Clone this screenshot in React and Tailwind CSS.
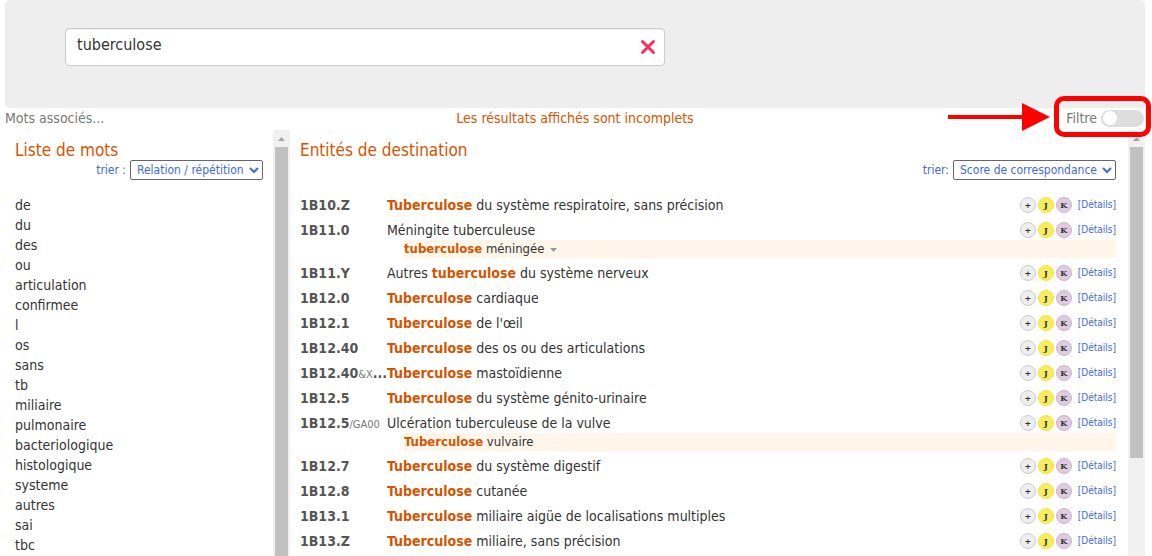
import { useState } from "react";

const words = [
  "de", "du", "des", "ou", "articulation", "confirmee", "l", "os", "sans", "tb", "miliaire",
  "pulmonaire", "bacteriologique", "histologique", "systeme", "autres", "sai", "tbc",
];

const T = "Tuberculose";

const entities = [
  { code: "1B10.Z", hit: T, after: " du système respiratoire, sans précision" },
  {
    code: "1B11.0", before: "Méningite tuberculeuse",
    sub: { hit: "tuberculose", after: " méningée", more: true },
  },
  { code: "1B11.Y", before: "Autres ", hit: "tuberculose", after: " du système nerveux" },
  { code: "1B12.0", hit: T, after: " cardiaque" },
  { code: "1B12.1", hit: T, after: " de l'œil" },
  { code: "1B12.40", hit: T, after: " des os ou des articulations" },
  { code: "1B12.40", extra: "&X", cut: true, hit: T, after: " mastoïdienne" },
  { code: "1B12.5", hit: T, after: " du système génito-urinaire" },
  {
    code: "1B12.5", extra: "/GA00", before: "Ulcération tuberculeuse de la vulve",
    sub: { hit: T, after: " vulvaire" },
  },
  { code: "1B12.7", hit: T, after: " du système digestif" },
  { code: "1B12.8", hit: T, after: " cutanée" },
  { code: "1B13.1", hit: T, after: " miliaire aigüe de localisations multiples" },
  { code: "1B13.Z", hit: T, after: " miliaire, sans précision" },
];

function Hit({ children }) {
  return <b className="font-bold text-[#d45500]">{children}</b>;
}

function Badge({ label, tone }) {
  return (
    <button
      type="button"
      className={`flex h-4 w-4 items-center justify-center rounded-full border font-['DejaVu_Serif',serif] text-[8px] leading-none font-bold text-[#333] ${tone}`}
    >
      {label}
    </button>
  );
}

function ScrollRail({ children }) {
  return (
    <div className="flex w-[17px] shrink-0 flex-col items-center bg-[#f1f1f1]" aria-hidden="true">
      <svg className="h-[17px] w-[17px] shrink-0" viewBox="0 0 17 17">
        <path d="M5 11h7L8.500 7z" fill="#a3a3a3" />
      </svg>
      {children}
    </div>
  );
}

function SortSelect({ id, label, option }) {
  return (
    <div className="flex h-5 items-center justify-end gap-1 text-xs text-[#4169e1]">
      <label htmlFor={id}>{label}</label>
      <select id={id} className="h-5 rounded-[2px] border border-[#666] bg-white px-0.5 text-xs">
        <option>{option}</option>
      </select>
    </div>
  );
}

function Entity({ item }) {
  return (
    <li className="py-0.5">
      <div className="flex h-[21px] items-center">
        <div className="w-[87px] shrink-0 whitespace-nowrap font-bold text-[#555]">
          {item.code}
          {item.extra && <span className="text-[11px] font-normal text-[#777]">{item.extra}</span>}
          {item.cut && "..."}
        </div>
        <div className="min-w-0 flex-1 truncate">
          {item.before}
          {item.hit && <Hit>{item.hit}</Hit>}
          {item.after}
        </div>
        <div className="flex items-center gap-0.5">
          <Badge label="+" tone="border-[#ccc] bg-[#eee]" />
          <Badge label="J" tone="border-[#f0e92a] bg-[#f8ec62]" />
          <Badge label="K" tone="border-[#cdb0d0] bg-[#e0cce0]" />
          <a href="#details" className="ml-1 pt-px text-[10px] text-[#4169e1]">[Détails]</a>
        </div>
      </div>
      {item.sub && (
        <div className="ml-[104px] flex h-[18px] items-center bg-[#fff5e8] text-[13px]">
          <span>
            <Hit>{item.sub.hit}</Hit>
            {item.sub.after}
          </span>
          {item.sub.more && (
            <svg className="mt-0.5 ml-1.5 h-1 w-[7px]" viewBox="0 0 7 4" aria-hidden="true">
              <path d="M0 0h7L3.500 4z" fill="#8a9bb0" />
            </svg>
          )}
        </div>
      )}
    </li>
  );
}

export default function App() {
  const [query, setQuery] = useState("tuberculose");
  return (
    <div className="flex h-screen flex-col overflow-hidden bg-white pr-[7px] pl-[5px] font-['DejaVu_Sans_Condensed','DejaVu_Sans',sans-serif] text-sm text-[#333]">
      <header className="shrink-0 rounded-[5px] bg-[#eee] px-[60px] pt-7 pb-[42px]">
        <div className="flex h-[38px] w-full max-w-[600px] items-center rounded border border-[#ccc] bg-white pr-2 pl-[11px] shadow-[inset_0_1px_1px_#eee]">
          <input
            aria-label="Recherche"
            value={query}
            onChange={(e) => setQuery(e.target.value)}
            className="min-w-0 flex-1 bg-transparent pb-1 text-base outline-none"
          />
          <button type="button" aria-label="Effacer" onClick={() => setQuery("")}>
            <svg className="h-4 w-4" viewBox="0 0 16 16" fill="none" stroke="#ff2d5c" strokeWidth="3" strokeLinecap="round">
              <path d="M2.500 2.500l11 11M13.500 2.500l-11 11" />
            </svg>
          </button>
        </div>
      </header>

      <div className="grid h-[22px] shrink-0 grid-cols-[1fr_auto_1fr] items-center pb-0.5">
        <span className="text-[#777]">Mots associés...</span>
        <span className="text-[#d45500]">Les résultats affichés sont incomplets</span>
        <label className="relative flex items-center gap-1 justify-self-end pr-px text-[#777]">
          Filtre
          <input type="checkbox" role="switch" className="sr-only" />
          <span className="flex h-[17px] w-[43px] items-center rounded-full bg-[#ddd] px-0.5">
            <span className="h-3.5 w-3.5 rounded-full bg-white" />
          </span>
          <span className="pointer-events-none absolute -top-3 -right-1.5 -bottom-[9px] -left-3 z-10 rounded-[10px] border-5 border-[#f00]" />
          <svg className="absolute -top-[5px] right-full mr-4 h-7 w-[102px]" viewBox="0 0 102 28" aria-hidden="true">
            <path d="M0 12h74V0l28 14-28 14V16H0z" fill="#f00" />
          </svg>
        </label>
      </div>

      <div className="flex min-h-0 flex-1">
        <section className="flex w-[285px] shrink-0 overflow-hidden">
          <div className="flex-1 pr-2.5 pl-2.5">
            <h2 className="pt-2.5 text-[17px] leading-5 text-[#d45500]">Liste de mots</h2>
            <SortSelect id="sort-words" label="trier :" option="Relation / répétition" />
            <ul className="pt-[15px] leading-5">
              {words.map((w) => (
                <li key={w}>{w}</li>
              ))}
            </ul>
          </div>
          <ScrollRail>
            <div className="w-[13px] flex-1 bg-[#c1c1c1]" />
          </ScrollRail>
        </section>

        <section className="flex min-w-0 flex-1 overflow-hidden">
          <div className="min-w-0 flex-1 pr-3 pl-2.5">
            <h2 className="pt-2.5 text-[17px] leading-5 text-[#d45500]">Entités de destination</h2>
            <SortSelect id="sort-entities" label="trier:" option="Score de correspondance" />
            <ul className="pt-3">
              {entities.map((item, i) => (
                <Entity key={i} item={item} />
              ))}
            </ul>
          </div>
          <ScrollRail>
            <div className="h-[73%] w-[13px] bg-[#c1c1c1]" />
          </ScrollRail>
        </section>
      </div>
    </div>
  );
}
